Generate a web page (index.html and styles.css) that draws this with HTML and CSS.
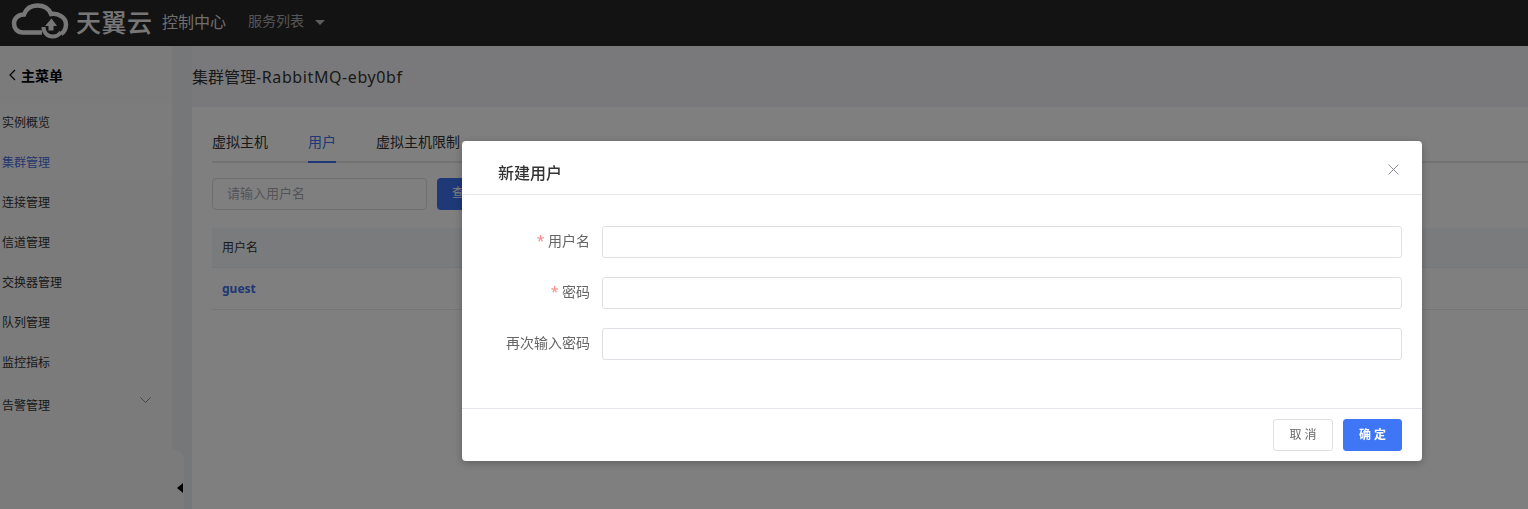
FILE: index.html
```html
<!DOCTYPE html>
<html lang="zh">
<head>
<meta charset="utf-8">
<title>新建用户</title>
<link rel="stylesheet" href="styles.css">
</head>
<body>
<div class="page">
  <header class="topbar">
    <svg class="logo" width="60" height="40" viewBox="0 0 60 40" fill="none">
      <path d="M32 29.500H13C7 29.500 4 25 4 20.500C4 15 8.500 11.500 14 11.500C16 6 21 2.500 27.500 2.500C34 2.500 39 6 41 11C48 10 56 14 56 21.500C56 26 54 29 51 31" stroke="#eee" stroke-width="4.500"/>
      <path d="M33.500 24C33.500 29.500 37.500 33.500 42.500 33.500C47 33.500 49.500 31.500 51 29" stroke="#eee" stroke-width="4"/>
      <path d="M35 23L41.500 15.500L47 23H43.500V27.500H38.500V23Z" fill="#eee"/>
    </svg>
    <span class="brand">天翼云</span>
    <span class="console">控制中心</span>
    <span class="services">服务列表</span>
    <span class="caret"></span>
  </header>
  <div class="body">
    <aside class="sidebar">
      <div class="back">
        <svg width="8" height="12" viewBox="0 0 8 12" fill="none"><path d="M7 1L2 6L7 11" stroke="#000" stroke-width="1.200"/></svg>
        <span>主菜单</span>
      </div>
      <nav class="menu">
        <div class="menu-item tinted">实例概览</div>
        <div class="menu-item tinted active">集群管理</div>
        <div class="menu-item">连接管理</div>
        <div class="menu-item">信道管理</div>
        <div class="menu-item">交换器管理</div>
        <div class="menu-item">队列管理</div>
        <div class="menu-item">监控指标</div>
        <div class="menu-item expand">告警管理
          <svg width="11" height="6" viewBox="0 0 11 6" fill="none"><path d="M.5 .5L5.500 5.500L10.500 .5" stroke="#8a8a94"/></svg>
        </div>
      </nav>
    </aside>
    <div class="gutter">
      <div class="handle"><span class="handle-arrow"></span></div>
    </div>
    <main class="main">
      <h1 class="title">集群管理<span class="latin">-RabbitMQ-eby0bf</span></h1>
      <section class="card">
        <div class="tabs">
          <span class="tab">虚拟主机</span>
          <span class="tab current">用户</span>
          <span class="tab">虚拟主机限制</span>
        </div>
        <div class="filters">
          <div class="search">请输入用户名</div>
          <div class="query">查询</div>
        </div>
        <div class="thead">用户名</div>
        <div class="trow">guest</div>
      </section>
    </main>
  </div>
</div>
<div class="mask"></div>
<div class="dialog">
  <div class="dialog-head">
    <span>新建用户</span>
    <svg class="close" width="11" height="11" viewBox="0 0 11 11" fill="none"><path d="M.5 .5L10.500 10.500M10.500 .5L.5 10.500" stroke="#8e8e96"/></svg>
  </div>
  <form class="dialog-body">
    <div class="field"><label><i>*</i> 用户名</label><div class="input"></div></div>
    <div class="field"><label><i>*</i> 密码</label><div class="input"></div></div>
    <div class="field"><label>再次输入密码</label><div class="input"></div></div>
  </form>
  <div class="dialog-foot">
    <div class="btn">取 消</div>
    <div class="btn primary">确 定</div>
  </div>
</div>
</body>
</html>
```
FILE: styles.css
```css
* { box-sizing: border-box; }
html, body { margin: 0; height: 100%; overflow: hidden; }
body { font-family: "Noto Sans", "Noto Sans CJK SC", sans-serif; font-size: 12px; color: #333; }
.page { width: 1528px; height: 509px; display: flex; flex-direction: column; background: #f4f5f7; }
.topbar { height: 46px; flex: none; background: #262626; display: flex; align-items: center; padding-left: 10px; }
.logo { flex: none; }
.brand { font-size: 25px; font-weight: 500; letter-spacing: .5px; color: #eee; margin-left: 6px; line-height: 46px; width: 76px; white-space: nowrap; margin-top: -3px; }
.console { font-size: 16px; color: #ddd; margin-left: 10px; margin-top: -5px; }
.services { font-size: 14px; color: #aaa; margin-left: 22px; margin-top: -6px; }
.caret { width: 0; height: 0; border-left: 5px solid transparent; border-right: 5px solid transparent; border-top: 5px solid #bbb; margin-left: 11px; margin-top: -1px; }
.body { flex: 1; display: flex; min-height: 0; }
.sidebar { width: 172px; flex: none; background: #f6f7f9; }
.back { height: 56px; display: flex; align-items: center; gap: 5px; padding: 2px 0 0 8px; font-size: 14px; font-weight: 700; color: #000; }
.menu-item { height: 40px; line-height: 42px; padding-left: 2px; color: #333; white-space: nowrap; }
.tinted { background: #f8f9fa; }
.active { color: #4a6fe0; }
.expand { display: flex; align-items: center; justify-content: space-between; padding: 3px 21px 0 2px; height: 44px; line-height: 40px; }
.expand svg { margin-top: -11px; }
.gutter { width: 20px; flex: none; background: #eceef2; position: relative; }
.handle { position: absolute; left: 0; bottom: 0; width: 12px; height: 59px; background: #f6f7f9; border-top-right-radius: 10px; }
.handle-arrow { position: absolute; left: 5px; top: 33px; width: 0; height: 0; border-top: 5px solid transparent; border-bottom: 5px solid transparent; border-right: 6px solid #000; }
.main { flex: 1; min-width: 0; background: #f2f3f6; }
.title { margin: 0; height: 61px; line-height: 62px; font-size: 16px; font-weight: 400; color: #333; white-space: nowrap; }
.latin { letter-spacing: .6px; }
.card { background: #fff; height: 402px; padding: 20px 0 20px 20px; }
.tabs { display: flex; height: 36px; border-bottom: 2px solid #e4e5ea; gap: 40px; }
.tab { height: 36px; line-height: 30px; font-size: 14px; color: #333; }
.tab.current { color: #3f6fe8; border-bottom: 2px solid #3f6fe8; }
.filters { display: flex; gap: 10px; margin-top: 15px; height: 32px; }
.search { width: 215px; height: 32px; border: 1px solid #dcdde3; border-radius: 4px; line-height: 28px; padding-left: 14px; font-size: 13px; color: #a9a9b0; }
.query { width: 70px; height: 32px; background: #3f72f0; border-radius: 4px; color: #fff; line-height: 30px; padding-left: 15px; }
.thead { margin-top: 18px; height: 40px; line-height: 40px; background: #f5f6f8; padding-left: 10px; border-bottom: 1px solid #eceef1; color: #333; }
.trow { height: 42px; line-height: 42px; padding-left: 10px; border-bottom: 1px solid #e9eaee; color: #3f6fe8; font-weight: 700; }
.mask { position: fixed; inset: 0; background: rgba(0, 0, 0, .5); }
.dialog { position: fixed; left: 462px; top: 141px; width: 960px; height: 320px; background: #fff; border-radius: 4px; box-shadow: 0 2px 8px rgba(0, 0, 0, .25); display: flex; flex-direction: column; }
.dialog-head { height: 54px; flex: none; border-bottom: 1px solid #e6e6ec; padding-left: 36px; font-size: 16px; font-weight: 500; line-height: 64px; color: #333; position: relative; }
.close { position: absolute; right: 23px; top: 23px; }
.dialog-body { flex: 1; padding: 31px 20px 0 0; display: flex; flex-direction: column; gap: 19px; }
.field { display: flex; align-items: center; height: 32px; }
.field label { width: 128px; text-align: right; font-size: 14px; line-height: 28px; margin-top: -3px; color: #666; white-space: nowrap; }
.field i { font-style: normal; color: #f78989; }
.input { margin-left: 12px; flex: 1; height: 32px; border: 1px solid #dfe0e6; border-radius: 3px; background: #fff; }
.dialog-foot { height: 53px; flex: none; border-top: 1px solid #e6e6ec; display: flex; justify-content: flex-end; align-items: flex-start; gap: 10px; padding: 10px 20px 0 0; }
.btn { width: 60px; height: 32px; line-height: 30px; text-align: center; border: 1px solid #dfe0e6; border-radius: 3px; color: #666; font-size: 12px; }
.btn.primary { width: 59px; background: #3f76f6; border-color: #3f76f6; color: #fff; font-weight: 700; }
```
